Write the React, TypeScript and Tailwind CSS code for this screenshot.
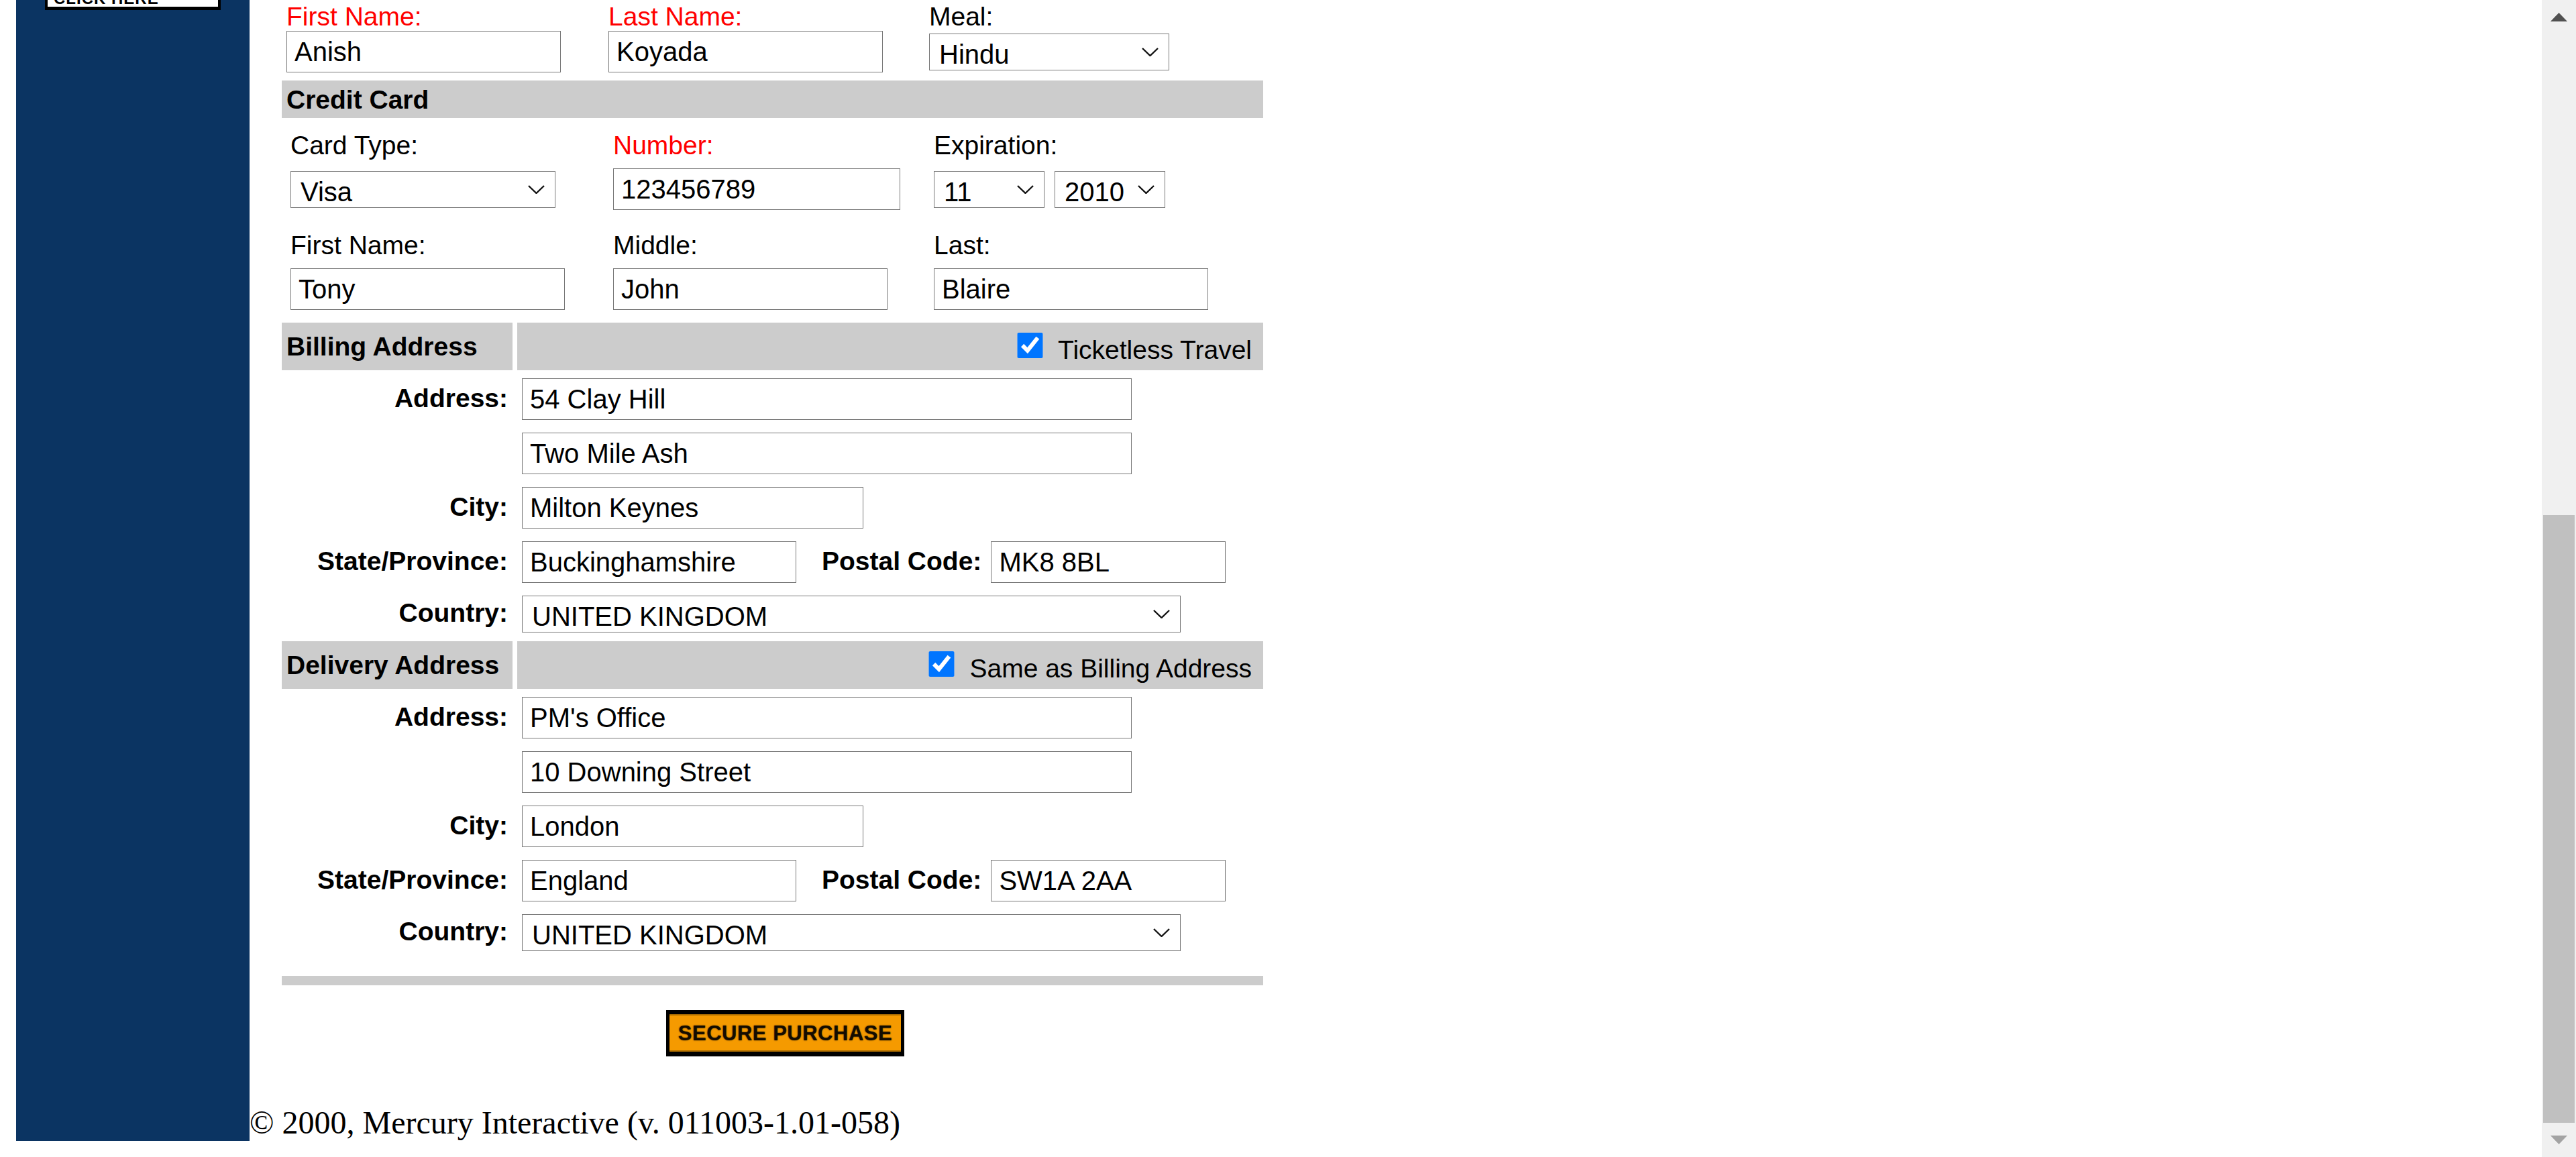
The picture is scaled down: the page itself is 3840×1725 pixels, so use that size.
import React from "react";

function TextBox({ value, w }: { value: string; w: string }) {
  return (
    <input
      type="text"
      defaultValue={value}
      className={`${w} h-[62px] shrink-0 border border-[#767676] bg-white px-[11px] text-[40px] text-black outline-none`}
    />
  );
}

function DropDown({ value, w }: { value: string; w: string }) {
  return (
    <div className={`relative ${w} h-[55px] shrink-0`}>
      <select
        defaultValue={value}
        className="h-full w-full appearance-none rounded-none border border-[#767676] bg-white pb-[4px] pl-[14px] text-[40px] text-black outline-none"
      >
        <option>{value}</option>
      </select>
      {/* native arrow is hidden, so draw the chevron */}
      <svg
        className="pointer-events-none absolute right-[16px] top-[21px]"
        width="25"
        height="13"
        viewBox="0 0 25 13"
      >
        <path d="M1 1 L12.5 12 L24 1" fill="none" stroke="#111" strokeWidth="2.4" />
      </svg>
    </div>
  );
}

function Field({ label, red, children, w }: { label: string; red?: boolean; children: React.ReactNode; w: string }) {
  return (
    <div className={`${w} flex shrink-0 flex-col`}>
      <span className={`text-[39px] leading-[43px] ${red ? "text-[#ff0000]" : "text-black"}`}>{label}</span>
      <div className="mt-[13px] flex h-[62px] items-center gap-[15px]">{children}</div>
    </div>
  );
}

function SectionBar({ title, check }: { title: string; check: string }) {
  return (
    <div className="flex h-[71px] gap-[7px]">
      <div className="flex w-[344px] items-center bg-[#cccccc] pl-[7px] text-[39px] font-bold leading-[45px]">{title}</div>
      <div className="flex flex-1 items-start justify-end bg-[#cccccc] pr-[17px]">
        <input type="checkbox" defaultChecked className="m-0 mt-[15px] h-[38px] w-[39px] accent-[#0075ff]" />
        <span className="ml-[22px] mt-[18px] text-[39px] leading-[45px]">{check}</span>
      </div>
    </div>
  );
}

function AddrRow({ label, cls, children }: { label: string; cls: string; children: React.ReactNode }) {
  return (
    <div className={`${cls} flex items-center`}>
      <span className="mb-[4px] w-[358px] shrink-0 pr-[21px] text-right text-[39px] font-bold leading-[45px]">
        {label || "\u00a0"}
      </span>
      {children}
    </div>
  );
}

function Address({ a1, a2, city, state, zip }: { a1: string; a2: string; city: string; state: string; zip: string }) {
  return (
    <>
      <AddrRow label="Address:" cls="mt-[12px] h-[62px]">
        <TextBox value={a1} w="w-[909px]" />
      </AddrRow>
      <AddrRow label="" cls="mt-[19px] h-[62px]">
        <TextBox value={a2} w="w-[909px]" />
      </AddrRow>
      <AddrRow label="City:" cls="mt-[19px] h-[62px]">
        <TextBox value={city} w="w-[509px]" />
      </AddrRow>
      <AddrRow label="State/Province:" cls="mt-[19px] h-[62px]">
        <TextBox value={state} w="w-[409px]" />
        <span className="mb-[4px] ml-[38px] mr-[14px] text-[39px] font-bold leading-[45px]">Postal Code:</span>
        <TextBox value={zip} w="w-[350px]" />
      </AddrRow>
      <AddrRow label="Country:" cls="mt-[19px] h-[55px]">
        <DropDown value="UNITED KINGDOM" w="w-[982px]" />
      </AddrRow>
    </>
  );
}

function Scrollbar() {
  return (
    <div className="flex w-[51px] shrink-0 flex-col bg-[#f0f0f0]">
      <div className="flex h-[51px] items-center justify-center">
        <svg width="25" height="13" viewBox="0 0 25 13">
          <path d="M0 13 L12.5 0 L25 13 Z" fill="#505050" />
        </svg>
      </div>
      <div className="flex-1 px-[2px] pt-[717px]">
        <div className="h-[906px] w-full bg-[#c0c0c0]" />
      </div>
      <div className="flex h-[51px] items-center justify-center">
        <svg width="25" height="13" viewBox="0 0 25 13">
          <path d="M0 0 L12.5 13 L25 0 Z" fill="#a3a3a3" />
        </svg>
      </div>
    </div>
  );
}

export default function App() {
  return (
    <div className="flex h-[1725px] w-[3840px] overflow-hidden bg-white font-['Liberation_Sans',Arial,sans-serif] text-black">
      <div className="flex flex-1 flex-col pb-[24px]">
        <div className="flex pl-[24px]">
          {/* left nav column, scrolled so only the bottom of its button shows */}
          <div className="w-[348px] shrink-0 bg-[#0b3462]">
            <div className="ml-[43px] h-[15px] w-[262px] bg-black px-[4px]">
              <div className="h-[10px] overflow-hidden bg-white pl-[9px]">
                <div className="-mt-[14px] text-[24px] font-bold leading-[24px] tracking-[1px]">CLICK HERE</div>
              </div>
            </div>
          </div>

          <div className="flex flex-col">
            <div className="ml-[48px] flex w-[1463px] flex-col pt-[3px]">
              {/* passenger */}
              <div className="flex pl-[7px]">
                <div className="flex w-[480px] flex-col">
                  <span className="text-[39px] leading-[43px] text-[#ff0000]">First Name:</span>
                  <TextBox value="Anish" w="w-[409px]" />
                </div>
                <div className="flex w-[478px] flex-col">
                  <span className="text-[39px] leading-[43px] text-[#ff0000]">Last Name:</span>
                  <TextBox value="Koyada" w="w-[409px]" />
                </div>
                <div className="flex flex-col">
                  <span className="text-[39px] leading-[43px]">Meal:</span>
                  <div className="flex h-[62px] items-center">
                    <DropDown value="Hindu" w="w-[358px]" />
                  </div>
                </div>
              </div>

              <div className="mt-[12px] flex h-[56px] items-center bg-[#cccccc] pl-[7px] text-[39px] font-bold leading-[45px]">
                Credit Card
              </div>

              <div className="mt-[19px] flex pl-[13px]">
                <Field label="Card Type:" w="w-[481px]">
                  <DropDown value="Visa" w="w-[395px]" />
                </Field>
                <Field label="Number:" red w="w-[478px]">
                  <TextBox value="123456789" w="w-[428px]" />
                </Field>
                <Field label="Expiration:" w="w-[400px]">
                  <DropDown value="11" w="w-[165px]" />
                  <DropDown value="2010" w="w-[165px]" />
                </Field>
              </div>

              <div className="mt-[31px] flex pl-[13px]">
                <Field label="First Name:" w="w-[481px]">
                  <TextBox value="Tony" w="w-[409px]" />
                </Field>
                <Field label="Middle:" w="w-[478px]">
                  <TextBox value="John" w="w-[409px]" />
                </Field>
                <Field label="Last:" w="w-[420px]">
                  <TextBox value="Blaire" w="w-[409px]" />
                </Field>
              </div>

              <div className="mt-[19px]">
                <SectionBar title="Billing Address" check="Ticketless Travel" />
              </div>
              <Address a1="54 Clay Hill" a2="Two Mile Ash" city="Milton Keynes" state="Buckinghamshire" zip="MK8 8BL" />

              <div className="mt-[13px]">
                <SectionBar title="Delivery Address" check="Same as Billing Address" />
              </div>
              <Address a1="PM's Office" a2="10 Downing Street" city="London" state="England" zip="SW1A 2AA" />

              <div className="mt-[37px] h-[14px] bg-[#cccccc]" />

              <div className="ml-[573px] mt-[37px] h-[69px] w-[355px] bg-black px-[5px] pb-[7px] pt-[6px]">
                <div className="flex h-full items-center justify-center border-y-[2px] border-[#a86a00] bg-[#f59a00] text-[31px] font-bold leading-none tracking-[0.5px] text-[#140c00] [text-shadow:0_0_2px_#3a2400]">
                  SECURE PURCHASE
                </div>
              </div>
            </div>

            <p className="mt-[71px] font-['Liberation_Serif','Times_New_Roman',serif] text-[48px] leading-[55px]">
              © 2000, Mercury Interactive (v. 011003-1.01-058)
            </p>
          </div>
        </div>
      </div>
      <Scrollbar />
    </div>
  );
}
